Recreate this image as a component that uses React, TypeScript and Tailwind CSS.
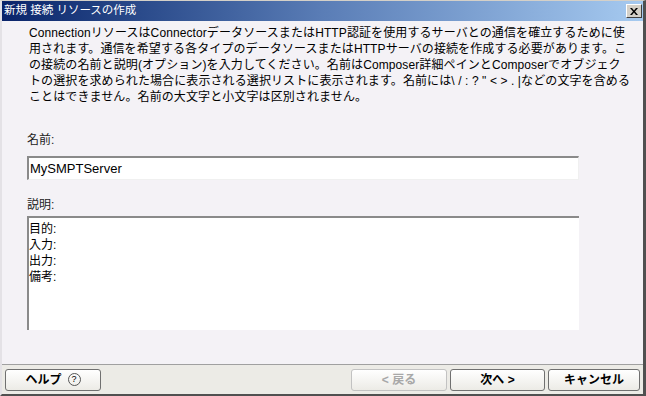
import React from "react";

const font = { fontFamily: '"Liberation Sans", "Noto Sans CJK JP", sans-serif' };

function Btn({ children, disabled, className = "" }: { children: React.ReactNode; disabled?: boolean; className?: string }) {
  return (
    <div
      className={
        "flex h-[22px] items-center justify-center rounded-[3px] border text-[12px] font-bold bg-gradient-to-b from-white to-[#ecebe6] " +
        (disabled ? "border-[#c2c2c2] text-[#a8a8a8] " : "border-[#707070] text-black ") +
        className
      }
    >
      {children}
    </div>
  );
}

export default function App() {
  const lines = [
    "ConnectionリソースはConnectorデータソースまたはHTTP認証を使用するサーバとの通信を確立するために使",
    "用されます。通信を希望する各タイプのデータソースまたはHTTPサーバの接続を作成する必要があります。こ",
    "の接続の名前と説明(オプション)を入力してください。名前はComposer詳細ペインとComposerでオブジェク",
    "トの選択を求められた場合に表示される選択リストに表示されます。名前には\\ / : ? \" < > . |などの文字を含める",
    "ことはできません。名前の大文字と小文字は区別されません。",
  ];
  return (
    <div style={font} className="flex h-[396px] w-[646px] flex-col overflow-hidden border-t border-l-2 border-r-[3px] border-b-2 border-t-[#d4d0c8] border-l-[#e4e2e6] border-r-[#505050] border-b-[#505050] bg-[#f4f2f6]">
      <div className="flex h-[20px] shrink-0 items-center justify-between bg-gradient-to-r from-[#0a246a] via-[#5a7db6] to-[#a6caf0] pl-[2px] pr-[1px]">
        <span className="text-[11.5px] leading-none text-white">新規 接続 リソースの作成</span>
        <div className="flex h-[14px] w-[16px] items-center justify-center border border-t-white border-l-white border-r-[#404040] border-b-[#404040] bg-[#d4d0c8]">
          <svg width="8" height="7" viewBox="0 0 8 7">
            <path d="M0 0h2l2 2.5L6 0h2L5 3.5 8 7H6L4 4.5 2 7H0l3-3.5z" fill="black" />
          </svg>
        </div>
      </div>
      <div className="flex flex-1 flex-col pl-[25px] pt-[4px] text-black">
        <div className="pl-[2px] text-[12px] leading-[16px] tracking-[0.1px]">
          {lines.map((l, i) => (
            <div key={i} className="whitespace-nowrap">{l}</div>
          ))}
        </div>
        <div className="mt-[27px] text-[12px] leading-[16px] text-[#222]">名前:</div>
        <div className="mt-[8px] flex h-[24px] w-[552px] items-center border-t-2 border-l-2 border-r border-b border-t-[#8a8a8a] border-l-[#8a8a8a] border-r-[#f0f0f0] border-b-[#f0f0f0] bg-white pl-[1px] text-[13px]">
          MySMPTServer
        </div>
        <div className="mt-[17px] text-[12px] leading-[16px] text-[#222]">説明:</div>
        <div className="mt-[3px] h-[114px] w-[552px] border-t-2 border-l-2 border-t-[#8a8a8a] border-l-[#8a8a8a] bg-white pt-[3px] text-[12px] leading-[16px]">
          <div>目的:</div>
          <div>入力:</div>
          <div>出力:</div>
          <div>備考:</div>
        </div>
      </div>
      <div className="flex h-[30px] shrink-0 items-center border-t border-t-[#a0a0a0] bg-[#ecebe6] pl-[3px] pr-[3px]">
        <Btn className="w-[96px] gap-[6px]">
          <span>ヘルプ</span>
          <span className="flex h-[13px] w-[13px] items-center justify-center rounded-full border border-[#555] text-[9px] font-normal leading-none">?</span>
        </Btn>
        <div className="flex-1" />
        <div className="flex gap-[3px]">
          <Btn disabled className="w-[96px]">&lt; 戻る</Btn>
          <Btn className="w-[95px]">次へ &gt;</Btn>
          <Btn className="w-[92px]">キャンセル</Btn>
        </div>
      </div>
    </div>
  );
}
